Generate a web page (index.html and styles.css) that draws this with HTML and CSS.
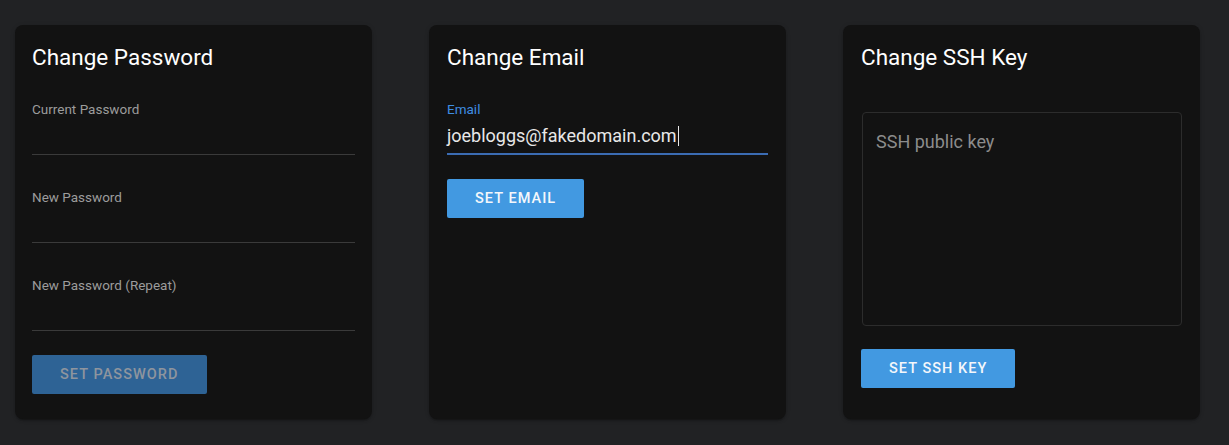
FILE: index.html
```html
<!DOCTYPE html>
<html lang="en">
<head>
<meta charset="utf-8">
<title>Account Settings</title>
<link rel="stylesheet" href="styles.css">
</head>
<body>
<main class="page">
  <section class="card">
    <h2 class="card-title">Change Password</h2>
    <div class="fields">
      <div class="field">
        <label class="field-label">Current Password</label>
        <div class="field-input"></div>
      </div>
      <div class="field">
        <label class="field-label">New Password</label>
        <div class="field-input"></div>
      </div>
      <div class="field">
        <label class="field-label">New Password (Repeat)</label>
        <div class="field-input"></div>
      </div>
    </div>
    <button class="btn btn-disabled" type="button">Set Password</button>
  </section>

  <section class="card">
    <h2 class="card-title">Change Email</h2>
    <div class="fields">
      <div class="field field-focused">
        <label class="field-label">Email</label>
        <div class="field-input"><span class="value">joebloggs@fakedomain.com</span><span class="caret"></span></div>
      </div>
    </div>
    <button class="btn btn-email" type="button">Set Email</button>
  </section>

  <section class="card">
    <h2 class="card-title">Change SSH Key</h2>
    <div class="textarea"><span class="placeholder">SSH public key</span></div>
    <button class="btn btn-ssh" type="button">Set SSH Key</button>
  </section>
</main>
</body>
</html>
```

FILE: styles.css
```css
* {
  box-sizing: border-box;
}

html, body {
  margin: 0;
  padding: 0;
  background: #212224;
}

body {
  font-family: Roboto, "Liberation Sans", sans-serif;
  color: #ffffff;
}

.page {
  display: flex;
  gap: 57px;
  padding: 25px 15px;
}

.card {
  width: 357px;
  height: 394px;
  flex: none;
  background: #121212;
  border-radius: 8px;
  padding: 16px 17px;
  display: flex;
  flex-direction: column;
  align-items: flex-start;
  box-shadow: 0 3px 1px -2px rgba(0,0,0,.2), 0 2px 2px 0 rgba(0,0,0,.14), 0 1px 5px 0 rgba(0,0,0,.12);
}

.card + .card {
  padding-left: 18px;
  padding-right: 18px;
}

.card-title {
  margin: 0;
  font-size: 22.5px;
  font-weight: 400;
  line-height: 32px;
  color: #ffffff;
}

.fields {
  align-self: stretch;
  display: flex;
  flex-direction: column;
  gap: 35px;
  margin-top: 29px;
}

.field {
  display: flex;
  flex-direction: column;
}

.field-label {
  font-size: 13.5px;
  line-height: 14px;
  height: 16px;
  color: #9c9c9c;
}

.field-input {
  height: 37px;
  border-bottom: 1px solid #3a3a3a;
  display: flex;
  align-items: flex-end;
  padding-bottom: 7px;
}

.field-focused .field-label {
  color: #3f8de2;
}

.field-focused .field-input {
  border-bottom: 2px solid #3b6cb3;
  height: 37px;
  padding-bottom: 6px;
}

.value {
  font-size: 18px;
  line-height: 22px;
  color: #e8e8e8;
}

.caret {
  display: inline-block;
  width: 1px;
  height: 20px;
  margin-left: 1px;
  margin-bottom: 1px;
  background: #e8e8e8;
}

.textarea {
  margin-top: 39px;
  margin-left: 1px;
  width: 320px;
  height: 214px;
  border: 1px solid #2c2c2c;
  border-radius: 4px;
  padding: 16px 13px;
}

.placeholder {
  font-size: 18px;
  line-height: 26px;
  color: #8c8c8c;
}

.btn {
  height: 39px;
  padding: 0 28px;
  border: none;
  border-radius: 2px;
  font-family: Roboto, "Liberation Sans", sans-serif;
  font-size: 14.5px;
  font-weight: 500;
  letter-spacing: 1.05px;
  text-transform: uppercase;
  background: #4299e1;
  color: #f4f7fb;
  display: flex;
  align-items: center;
  justify-content: center;
}

.btn-disabled {
  margin-top: 24px;
  background: #2e6395;
  color: #8e959e;
}

.btn-email {
  margin-top: 24px;
}

.btn-ssh {
  margin-top: 23px;
}
```
